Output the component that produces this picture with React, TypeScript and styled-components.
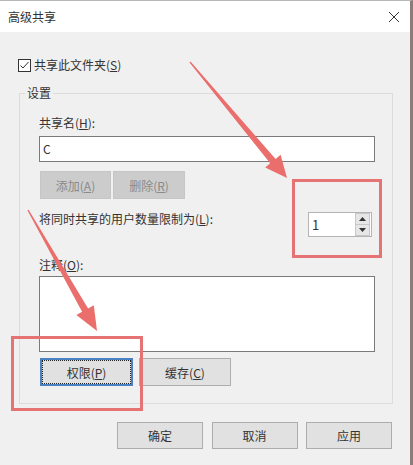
import styled, { createGlobalStyle } from "styled-components";

const GlobalStyle = createGlobalStyle`
  body {
    margin: 0;
    background: #f0f0f0;
    font-family: "Noto Sans CJK SC", "Liberation Sans", sans-serif;
  }
`;

const App = () => {
  return (
    <Window>
      <GlobalStyle />
      <TitleBar>
        <span>高级共享</span>
        <svg width="12" height="12" viewBox="0 0 12 12">
          <path d="M1 1 L11 11 M11 1 L1 11" stroke="#333" strokeWidth="1" />
        </svg>
      </TitleBar>
      <Content>
        <CheckRow>
          <CheckBox>
            <svg width="11" height="11" viewBox="0 0 11 11">
              <path d="M1.5 5.5 L4 8 L9.5 2" stroke="#333" strokeWidth="1" fill="none" />
            </svg>
          </CheckBox>
          <span>
            共享此文件夹(<u>S</u>)
          </span>
        </CheckRow>
        <Group>
          <legend>设置</legend>
          <GroupBody>
            <Label>
              共享名(<u>H</u>):
            </Label>
            <TextInput>C</TextInput>
            <ButtonRow $gap={2}>
              <Button $w={71} $disabled>
                添加(<u>A</u>)
              </Button>
              <Button $w={72} $disabled>
                删除(<u>R</u>)
              </Button>
            </ButtonRow>
            <LimitRow>
              <Label>
                将同时共享的用户数量限制为(<u>L</u>):
              </Label>
              <Spinner>
                <SpinValue>1</SpinValue>
                <SpinButtons>
                  <SpinBtn>
                    <svg width="7" height="4" viewBox="0 0 7 4">
                      <path d="M0 4 L3.5 0 L7 4 Z" fill="#333" />
                    </svg>
                  </SpinBtn>
                  <SpinBtn>
                    <svg width="7" height="4" viewBox="0 0 7 4">
                      <path d="M0 0 L3.5 4 L7 0 Z" fill="#333" />
                    </svg>
                  </SpinBtn>
                </SpinButtons>
              </Spinner>
            </LimitRow>
            <Label $top={20}>
              注释(<u>O</u>):
            </Label>
            <TextArea />
            <ButtonRow $gap={6} $top={6}>
              <Button $w={93} $focused>
                <span>
                  权限(<u>P</u>)
                </span>
              </Button>
              <Button $w={92}>
                缓存(<u>C</u>)
              </Button>
            </ButtonRow>
          </GroupBody>
        </Group>
        <Footer>
          <Button $w={86} $h={27}>确定</Button>
          <Button $w={86} $h={27}>取消</Button>
          <Button $w={86} $h={27}>应用</Button>
        </Footer>
      </Content>

      <Annotations width="413" height="465" viewBox="0 0 413 465">
        <polygon
          points="189.5,62.4 270.2,163.3 265.2,167.5 287,178 280.6,154.7 275.6,158.9 190.5,61.6"
          fill="#ea6e6c"
        />
        <polygon
          points="27.4,210.3 82.1,311.8 76.4,315.1 97,331 93.8,305.2 88.1,308.4 28.6,209.7"
          fill="#ea6e6c"
        />
        <rect x="293.5" y="180.5" width="87" height="76" fill="none" stroke="#e57373" strokeWidth="3" />
        <rect x="12.5" y="337.5" width="129" height="72" fill="none" stroke="#e57373" strokeWidth="3" />
      </Annotations>
    </Window>
  );
};

const Window = styled.div`
  position: relative;
  box-sizing: border-box;
  width: 413px;
  height: 465px;
  background: #f0f0f0;
  border-top: 1px solid #b8b8b8;
  border-right: 3px solid #8a7d75;
  font-size: 12px;
  color: #333;
  overflow: hidden;
`;

const TitleBar = styled.div`
  height: 31px;
  background: #ffffff;
  display: flex;
  align-items: center;
  justify-content: space-between;
  padding: 0 10px 0 8px;
  font-size: 12px;
  color: #333;
`;

const Content = styled.div`
  padding: 25px 0 0 18px;
`;

const CheckRow = styled.div`
  display: flex;
  align-items: center;
  height: 16px;
  line-height: 16px;
  gap: 3px;
`;

const CheckBox = styled.div`
  box-sizing: border-box;
  width: 13px;
  height: 13px;
  border: 1px solid #333;
  background: #fff;
  display: flex;
  align-items: center;
  justify-content: center;
`;

const Group = styled.fieldset`
  box-sizing: border-box;
  width: 374px;
  margin: 12px 0 0 1px;
  padding: 0;
  border: 1px solid #dcdcdc;

  legend {
    margin-left: 5px;
    padding: 0 2px;
    line-height: 16px;
    font-size: 12px;
  }
`;

const GroupBody = styled.div`
  display: flex;
  flex-direction: column;
  align-items: flex-start;
  padding: 14px 16px 17px 19px;
`;

const Label = styled.div<{ $top?: number }>`
  line-height: 16px;
  margin-top: ${(p) => p.$top ?? 0}px;
`;

const TextInput = styled.div`
  box-sizing: border-box;
  width: 336px;
  height: 26px;
  margin-top: 5px;
  border: 1px solid #7a7a7a;
  background: #fff;
  padding-left: 3px;
  line-height: 24px;
`;

const ButtonRow = styled.div<{ $gap: number; $top?: number }>`
  display: flex;
  gap: ${(p) => p.$gap}px;
  margin-top: ${(p) => p.$top ?? 9}px;
  margin-left: 1px;
`;

const Button = styled.div<{ $w: number; $h?: number; $disabled?: boolean; $focused?: boolean }>`
  box-sizing: border-box;
  width: ${(p) => p.$w}px;
  height: ${(p) => p.$h ?? 28}px;
  display: flex;
  align-items: center;
  justify-content: center;
  background: ${(p) => (p.$disabled ? "#cccccc" : "#e1e1e1")};
  color: ${(p) => (p.$disabled ? "#8a8a8a" : "#333")};
  border: ${(p) => (p.$focused ? "2px solid #4a80c4" : p.$disabled ? "1px solid #c6c6c6" : "1px solid #adadad")};

  ${(p) =>
    p.$focused &&
    `
    padding: 1px;
    & > span {
      box-sizing: border-box;
      width: 100%;
      height: 100%;
      display: flex;
      align-items: center;
      justify-content: center;
      outline: 1px dotted #222;
    }
  `}
`;

const LimitRow = styled.div`
  display: flex;
  align-items: flex-start;
  justify-content: space-between;
  width: 333px;
  margin-top: 12px;
`;

const Spinner = styled.div`
  box-sizing: border-box;
  display: flex;
  width: 64px;
  height: 25px;
  margin-top: 1px;
  border: 1px solid #b4b4b4;
  background: #fff;
`;

const SpinValue = styled.div`
  flex: 1;
  padding-left: 3px;
  line-height: 23px;
  font-size: 13px;
`;

const SpinButtons = styled.div`
  display: flex;
  flex-direction: column;
  width: 15px;
  padding: 0 1px 0 0;
`;

const SpinBtn = styled.div`
  flex: 1;
  display: flex;
  align-items: center;
  justify-content: center;
  background: #e6e6e6;
  border: 1px solid #c8c8c8;
  & + & {
    border-top: none;
  }
`;

const TextArea = styled.div`
  box-sizing: border-box;
  width: 336px;
  height: 76px;
  margin-top: 3px;
  border: 1px solid #7a7a7a;
  background: #fff;
`;

const Footer = styled.div`
  display: flex;
  justify-content: flex-end;
  gap: 8.5px;
  width: 374px;
  margin-top: 18px;
`;

const Annotations = styled.svg`
  position: absolute;
  left: 0;
  top: -1px;
  pointer-events: none;
`;

export default App;
